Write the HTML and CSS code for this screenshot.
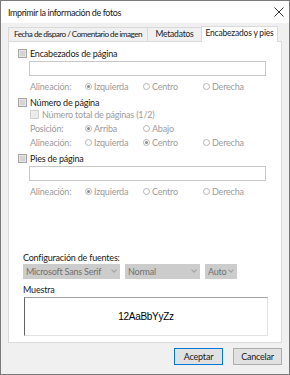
FILE: index.html
```html
<!DOCTYPE html>
<html lang="es">
<head>
    <meta charset="UTF-8">
    <title>Imprimir la información de fotos</title>
    <link rel="stylesheet" href="styles.css">
</head>
<body>
    <div class="window">
        <div class="titlebar">
            <span class="title">Imprimir la información de fotos</span>
            <svg class="close" width="10" height="10" viewBox="0 0 10 10"><path d="M0.5 0.5L9.5 9.5M9.5 0.5L0.5 9.5" stroke="#333" stroke-width="1"/></svg>
        </div>

        <div class="tabs">
            <div class="tab t1">Fecha de disparo / Comentario de imagen</div>
            <div class="tab t2">Metadatos</div>
            <div class="tab t3 active">Encabezados y pies</div>
        </div>

        <div class="panel">
            <div class="row check-row first">
                <span class="check"></span><span>Encabezados de página</span>
            </div>
            <div class="textbox"></div>
            <div class="row opts">
                <span class="lbl">Alineación:</span>
                <span class="opt"><span class="radio on"></span>Izquierda</span>
                <span class="opt"><span class="radio"></span>Centro</span>
                <span class="opt"><span class="radio"></span>Derecha</span>
            </div>

            <div class="row check-row gap">
                <span class="check"></span><span>Número de página</span>
            </div>
            <div class="row sub">
                <span class="check dis"></span><span>Número total de páginas (1/2)</span>
            </div>
            <div class="row opts pos">
                <span class="lbl">Posición:</span>
                <span class="opt"><span class="radio on"></span>Arriba</span>
                <span class="opt"><span class="radio"></span>Abajo</span>
            </div>
            <div class="row opts tight">
                <span class="lbl">Alineación:</span>
                <span class="opt"><span class="radio"></span>Izquierda</span>
                <span class="opt"><span class="radio on"></span>Centro</span>
                <span class="opt"><span class="radio"></span>Derecha</span>
            </div>

            <div class="row check-row gap">
                <span class="check"></span><span>Pies de página</span>
            </div>
            <div class="textbox"></div>
            <div class="row opts">
                <span class="lbl">Alineación:</span>
                <span class="opt"><span class="radio on"></span>Izquierda</span>
                <span class="opt"><span class="radio"></span>Centro</span>
                <span class="opt"><span class="radio"></span>Derecha</span>
            </div>

            <div class="fonts">
                <div class="row">Configuración de fuentes:</div>
                <div class="selects">
                    <div class="select s1">Microsoft Sans Serif<span class="chev"></span></div>
                    <div class="select s2">Normal<span class="chev"></span></div>
                    <div class="select s3">Auto<span class="chev"></span></div>
                </div>
                <div class="row sample-lbl">Muestra</div>
                <div class="sample">12AaBbYyZz</div>
            </div>
        </div>

        <div class="buttons">
            <div class="btn default">Aceptar</div>
            <div class="btn">Cancelar</div>
        </div>
    </div>
</body>
</html>
```

FILE: styles.css
```css
* {
    margin: 0;
    padding: 0;
    box-sizing: border-box;
}

body {
    font-family: Lato, "Noto Sans CJK JP", sans-serif;
    font-size: 9px;
    letter-spacing: -0.2px;
    color: #1a1a1a;
    background: #f0f0f0;
}

.window {
    width: 290px;
    height: 375px;
    background: #f0f0f0;
    border: 1px solid #7a7a7a;
    display: flex;
    flex-direction: column;
}

.titlebar {
    height: 22px;
    background: #fff;
    display: flex;
    align-items: center;
    justify-content: space-between;
    padding: 0 5px 0 7px;
}

.title {
    font-size: 9px;
    letter-spacing: -0.4px;
}

.tabs {
    display: flex;
    margin: 4px 0 0 7px;
    height: 14px;
    align-items: flex-end;
}

.tab {
    flex: none;
    height: 14px;
    line-height: 12px;
    border: 1px solid #d9d9d9;
    border-bottom: none;
    background: #f0f0f0;
    margin-right: -1px;
    white-space: nowrap;
    overflow: hidden;
    text-align: center;
    font-size: 8.5px;
}

.t1 { width: 140px; font-size: 8.2px; letter-spacing: -0.55px; }
.t2 { width: 55px; }
.t3 { width: 77px; }

.tab.active {
    height: 16px;
    margin-bottom: -1px;
    background: #fff;
    position: relative;
    z-index: 1;
}

.panel {
    margin: 0 7px 0 7px;
    height: 302px;
    background: #fff;
    border: 1px solid #d9d9d9;
    padding: 0 0 0 9px;
    display: flex;
    flex-direction: column;
}

.row {
    height: 12px;
    display: flex;
    align-items: center;
    white-space: nowrap;
}

.check-row.first {
    margin-top: 5px;
}

.check-row.gap {
    margin-top: 4px;
}

.check {
    width: 9px;
    height: 9px;
    border: 1px solid #a6a6a6;
    background: #d4d4d4;
    box-shadow: inset 0 0 0 1px #e6e6e6;
    margin-right: 3px;
}

.check.dis {
    border-color: #d0d0d0;
    background: #ececec;
    box-shadow: none;
}

.textbox {
    width: 237px;
    height: 15px;
    margin: 2px 0 0 11px;
    border: 1px solid #c8c8c8;
    background: #fff;
}

.opts {
    margin: 4px 0 0 12px;
    color: #9c9c9c;
    display: grid;
    grid-template-columns: 55px 58px 60px auto;
}

.opts.pos {
    margin-top: 2px;
}

.opts.tight {
    margin-top: 2px;
}

.opt {
    display: flex;
    align-items: center;
}

.radio {
    width: 7px;
    height: 7px;
    border-radius: 50%;
    border: 1px solid #b5b5b5;
    background: #fff;
    margin-right: 2px;
    position: relative;
}

.radio.on::after {
    content: "";
    position: absolute;
    left: 1px;
    top: 1px;
    width: 3px;
    height: 3px;
    border-radius: 50%;
    background: #8c8c8c;
}

.sub {
    margin-left: 12px;
    color: #9c9c9c;
}

.fonts {
    margin-top: 54px;
    margin-left: 5px;
}

.selects {
    display: flex;
    gap: 5px;
    margin-top: 1px;
}

.select {
    height: 15px;
    background: #cccccc;
    color: #707070;
    padding: 0 3px;
    display: flex;
    align-items: center;
    justify-content: space-between;
}

.s1 { width: 97px; }
.s2 { width: 75px; }
.s3 { width: 32px; }

.chev {
    width: 4px;
    height: 4px;
    border-right: 1px solid #a0a0a0;
    border-bottom: 1px solid #a0a0a0;
    transform: rotate(45deg);
    margin: -3px 1px 0 0;
}

.sample-lbl {
    margin-top: 4px;
}

.sample {
    width: 244px;
    height: 39px;
    margin: 2px 0 0 1px;
    border: 1px solid #e3e3e3;
    border-top-color: #a0a0a0;
    border-left-color: #646464;
    background: #fff;
    display: flex;
    align-items: center;
    justify-content: center;
    font-family: "Liberation Sans", sans-serif;
    font-size: 10px;
    letter-spacing: -0.3px;
    color: #000;
}

.buttons {
    display: flex;
    justify-content: flex-end;
    gap: 10px;
    margin: 5px 7px 0 0;
}

.btn {
    width: 49px;
    height: 17px;
    border: 1px solid #adadad;
    background: #e1e1e1;
    display: flex;
    align-items: center;
    justify-content: center;
}

.btn.default {
    border-color: #0078d7;
}
```
